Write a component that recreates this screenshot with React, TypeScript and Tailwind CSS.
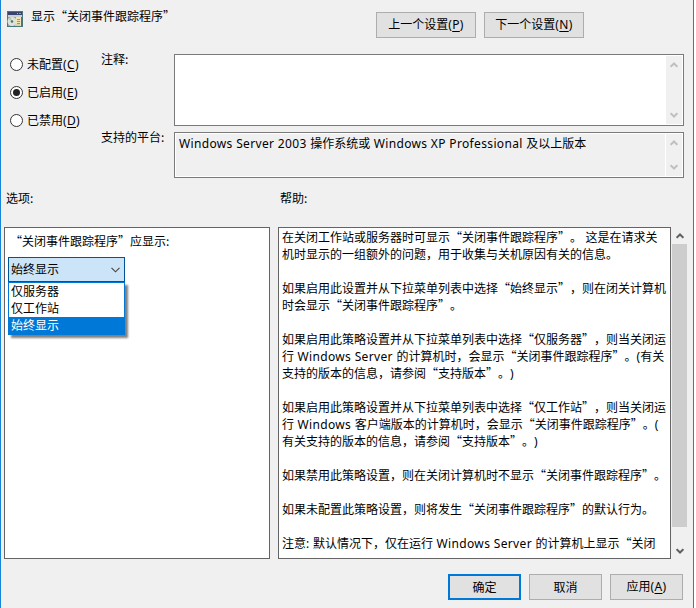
import type { ReactNode } from 'react';

const helpLines = [
  '在关闭工作站或服务器时可显示“关闭事件跟踪程序”。 这是在请求关',
  '机时显示的一组额外的问题，用于收集与关机原因有关的信息。',
  '',
  '如果启用此设置并从下拉菜单列表中选择“始终显示”，则在闭关计算机',
  '时会显示“关闭事件跟踪程序”。',
  '',
  '如果启用此策略设置并从下拉菜单列表中选择“仅服务器”，则当关闭运',
  '行 Windows Server 的计算机时，会显示“关闭事件跟踪程序”。(有关',
  '支持的版本的信息，请参阅“支持版本”。)',
  '',
  '如果启用此策略设置并从下拉菜单列表中选择“仅工作站”，则当关闭运',
  '行 Windows 客户端版本的计算机时，会显示“关闭事件跟踪程序”。(',
  '有关支持的版本的信息，请参阅“支持版本”。)',
  '',
  '如果禁用此策略设置，则在关闭计算机时不显示“关闭事件跟踪程序”。',
  '',
  '如果未配置此策略设置，则将发生“关闭事件跟踪程序”的默认行为。',
  '',
  '注意: 默认情况下，仅在运行 Windows Server 的计算机上显示“关闭',
];

const states = [
  { label: '未配置', hotkey: 'C', checked: false },
  { label: '已启用', hotkey: 'E', checked: true },
  { label: '已禁用', hotkey: 'D', checked: false },
];

const choices = ['仅服务器', '仅工作站', '始终显示'];

// Latin runs use their own font, the quotes stay full width
const Mixed = ({ text }: { text: string }) => (
  <>
    {text.split(/([\x20-\x7e]+)/).map((part, i) =>
      i % 2 === 1 ? (
        <span key={i} className="font-['Noto_Sans'] tracking-[0.35px]">
          {part}
        </span>
      ) : (
        part
      )
    )}
  </>
);

const Hotkey = ({ label, hotkey }: { label: string; hotkey: string }) => (
  <span>
    {label}
    <span className="font-['Noto_Sans'] tracking-[0.35px]">
      (<span className="underline underline-offset-2">{hotkey}</span>)
    </span>
  </span>
);

const Arrow = ({ up = false, color }: { up?: boolean; color: string }) => (
  <svg width="8" height="6" viewBox="0 0 8 6" className="shrink-0">
    <path
      d={up ? 'M0.6 4.8 4 1.5 7.4 4.8' : 'M0.6 1.2 4 4.5 7.4 1.2'}
      fill="none"
      stroke={color}
      strokeWidth="2"
    />
  </svg>
);

const Button = ({ className, children }: { className: string; children: ReactNode }) => (
  <button
    className={`flex h-[26px] shrink-0 items-center justify-center bg-[#e1e1e1] pb-[2px] ${className}`}
  >
    {children}
  </button>
);

const PolicyIcon = () => (
  <svg width="16" height="16" viewBox="0 0 16 16" shapeRendering="crispEdges">
    <rect width="16" height="16" fill="#4a7878" />
    <rect x="1" y="1" width="14" height="3" fill="#39436f" />
    <rect x="10" y="2" width="1" height="1" fill="#a9b4d0" />
    <rect x="12" y="2" width="2" height="1" fill="#7fa3a3" />
    <rect x="1" y="4" width="14" height="2" fill="#d0d0d0" />
    <rect x="1" y="6" width="8" height="9" fill="#8fa3a0" />
    <circle cx="5" cy="10.5" r="4.5" fill="#dde2dd" shapeRendering="auto" />
    <path d="M5 10.5 1.5 8 3.5 6.3Z" fill="#a9cda0" shapeRendering="auto" />
    <circle cx="5" cy="10.5" r="1.2" fill="#52706b" shapeRendering="auto" />
    <rect x="9" y="6" width="5" height="9" fill="#efe4b8" />
    <path d="M10 8.5h3M10 10.5h3M10 12.5h3" stroke="#a0946a" />
    <rect x="8" y="13" width="5" height="2" fill="#ded3a2" />
  </svg>
);

const App = () => {
  return (
    <div className="flex h-[608px] w-[696px] overflow-hidden bg-white font-['Noto_Sans_CJK_SC',sans-serif] text-[12px] leading-[17px] whitespace-nowrap text-black [text-spacing-trim:space-all]">
      <div className="flex w-[694px] flex-col border-x border-[#1883d7] bg-[#f0f0f0]">
        <header className="flex h-[54px] shrink-0 items-start">
          <div className="mt-[11px] ml-[6px]">
            <PolicyIcon />
          </div>
          <h1 className="mt-[7px] ml-[8px] w-[345px]">显示“关闭事件跟踪程序”</h1>
          <div className="mt-[12px] flex gap-2">
            <Button className="w-[100px] border border-[#adadad]">
              <Hotkey label="上一个设置" hotkey="P" />
            </Button>
            <Button className="w-[100px] border border-[#adadad]">
              <Hotkey label="下一个设置" hotkey="N" />
            </Button>
          </div>
        </header>

        <section className="flex h-[124px] shrink-0">
          <div className="flex w-[99px] flex-col gap-[11px] pt-[2px] pl-[9px]">
            {states.map((s) => (
              <label key={s.hotkey} className="flex h-[17px] items-center gap-1">
                <span className="flex size-[13px] items-center justify-center rounded-full border border-[#333] bg-white">
                  {s.checked && <span className="size-[7px] rounded-full bg-[#222]" />}
                </span>
                <span className="-mt-[2px]">
                  <Hotkey label={s.label} hotkey={s.hotkey} />
                </span>
              </label>
            ))}
          </div>
          <div className="w-[74px]">
            <div className="-mt-[4px] h-[78px] pl-px">注释:</div>
            <div className="pl-px">支持的平台:</div>
          </div>
          <div className="flex w-[510px] flex-col gap-[6px]">
            <div className="flex h-[72px] justify-end border border-[#7a7a7a] bg-white p-px">
              <div className="flex w-[16px] flex-col items-center justify-between bg-[#f0f0f0] py-[6px]">
                <Arrow up color="#bfbfbf" />
                <Arrow color="#bfbfbf" />
              </div>
            </div>
            <div className="flex h-[46px] justify-between border border-[#7a7a7a] bg-white p-px">
              <div className="grow bg-[#f0f0f0] pl-[3px]">
                <Mixed text="Windows Server 2003 操作系统或 Windows XP Professional 及以上版本" />
              </div>
              <div className="ml-px flex w-[16px] flex-col items-center justify-between bg-[#f0f0f0] py-[6px]">
                <Arrow up color="#bfbfbf" />
                <Arrow color="#bfbfbf" />
              </div>
            </div>
          </div>
        </section>

        <div className="flex h-[49px] shrink-0 pt-[11px]">
          <span className="w-[275px] pl-[5px]">选项:</span>
          <span className="pl-[4px]">帮助:</span>
        </div>

        <section className="flex h-[332px] shrink-0 pl-[3px]">
          <div className="w-[266px] border border-[#646464] bg-white pt-[4px] pl-[3px]">
            <div className="pl-[2px]">“关闭事件跟踪程序”应显示:</div>
            <div className="relative mt-[8px] w-[117px]">
              <div className="flex h-[25px] items-center justify-between border border-[#005499] bg-[#cce4f7] pr-[4px] pl-[2px]">
                <span className="-mt-[2px]">始终显示</span>
                <svg width="9" height="6" viewBox="0 0 9 6">
                  <path d="M0.5 0.8 4.5 4.8 8.5 0.8" fill="none" stroke="#444" strokeWidth="1.1" />
                </svg>
              </div>
              <ul className="absolute top-[25px] left-0 w-[117px] border border-[#0078d7] bg-white shadow-[3px_3px_2px_rgba(0,0,0,0.5)]">
                {choices.map((c) => (
                  <li
                    key={c}
                    className={`h-[17px] pl-[2px] leading-[15px] ${c === '始终显示' ? 'bg-[#0078d7] text-white' : ''}`}
                  >
                    {c}
                  </li>
                ))}
              </ul>
            </div>
          </div>
          <div className="ml-[8px] w-[393px] overflow-hidden border border-[#646464] bg-white pl-[3px]">
            {helpLines.map((line, i) => (
              <p key={i} className="h-[17px]">
                <Mixed text={line} />
              </p>
            ))}
          </div>
          <div className="ml-px flex w-[15px] flex-col items-center">
            <div className="flex h-[17px] items-center pt-px">
              <Arrow up color="#606060" />
            </div>
            <div className="h-[283px] w-full bg-[#cdcdcd]" />
            <div className="flex h-[32px] items-center pt-[16px]">
              <Arrow color="#606060" />
            </div>
          </div>
        </section>

        <footer className="flex gap-2 pt-[15px] pl-[447px]">
          <Button className="w-[73px] border-2 border-[#0078d7]">确定</Button>
          <Button className="w-[73px] border border-[#adadad]">取消</Button>
          <Button className="w-[73px] border border-[#adadad]">
            <Hotkey label="应用" hotkey="A" />
          </Button>
        </footer>
      </div>
    </div>
  );
};

export default App;
